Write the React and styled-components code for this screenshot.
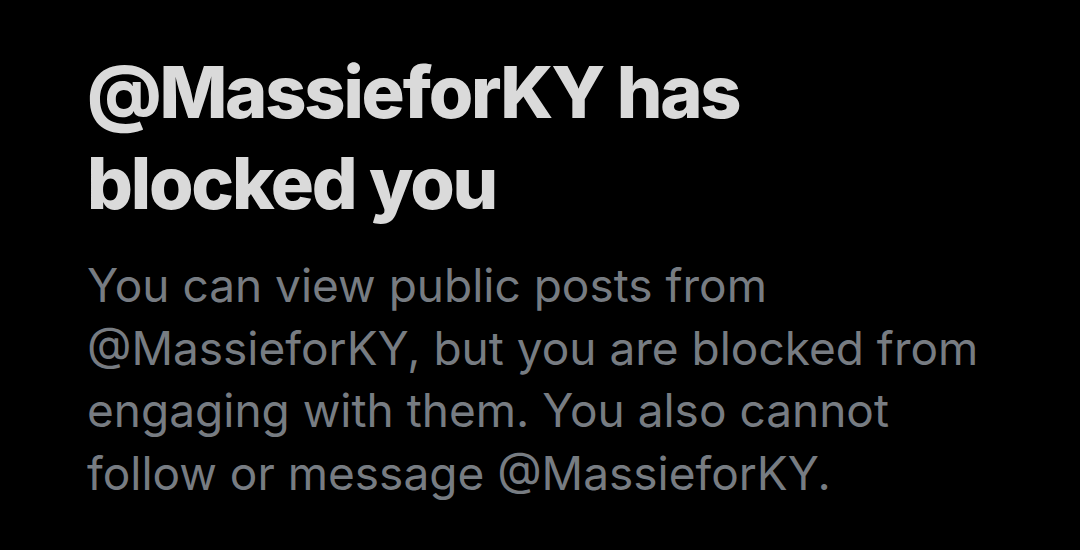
import React from 'react'
import styled, {createGlobalStyle} from 'styled-components'

const GlobalStyle = createGlobalStyle`
  html, body {
    margin: 0;
    padding: 0;
    background: #000;
  }
  body {
    font-family: Inter, "Noto Sans", "Liberation Sans", sans-serif;
    -webkit-font-smoothing: antialiased;
  }
`

const Page = styled.div`
  box-sizing: border-box;
  width: 1080px;
  height: 550px;
  background: #000;
  padding: 46px 0 0 87px;
  overflow: hidden;
`

const Notice = styled.section`
  display: flex;
  flex-direction: column;
  width: 910px;
`

const Title = styled.h1`
  margin: 0;
  font-size: 72px;
  line-height: 91px;
  font-weight: 800;
  letter-spacing: -2.2px;
  color: #dadada;
`

const Body = styled.p`
  margin: 26px 0 0;
  font-size: 46px;
  line-height: 62.7px;
  font-weight: 400;
  letter-spacing: 0;
  color: #777c82;
`

export default function App() {
  const handle = '@MassieforKY'
  return (
    <>
      <GlobalStyle />
      <Page>
        <Notice>
          <Title>{handle} has blocked you</Title>
          <Body>
            You can view public posts from {handle}, but you are blocked from
            engaging with them. You also cannot follow or message {handle}.
          </Body>
        </Notice>
      </Page>
    </>
  )
}
